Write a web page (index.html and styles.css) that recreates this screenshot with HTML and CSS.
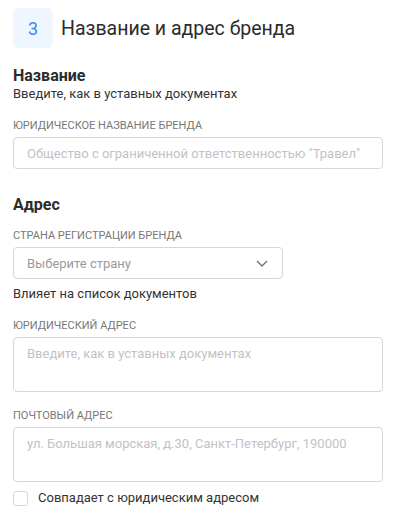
FILE: index.html
```html
<!DOCTYPE html>
<html lang="ru">
<head>
    <meta charset="UTF-8">
    <meta name="viewport" content="width=device-width, initial-scale=1.0">
    <title>Название и адрес бренда</title>
    <link rel="stylesheet" href="styles.css">
</head>
<body>
    <!-- Заголовок шага -->
    <div class="step-header">
        <div class="step-num">3</div>
        <h1 class="step-title">Название и адрес бренда</h1>
    </div>

    <!-- Название -->
    <div class="section">
        <h2 class="section-title">Название</h2>
        <p class="section-hint">Введите, как в уставных документах</p>

        <div class="field">
            <label class="field-label">Юридическое название бренда</label>
            <input class="input" type="text" placeholder="Общество с ограниченной ответственностью &quot;Травел&quot;">
        </div>
    </div>

    <!-- Адрес -->
    <div class="section section-address">
        <h2 class="section-title">Адрес</h2>

        <div class="field field-first">
            <label class="field-label">Страна регистрации бренда</label>
            <div class="select">
                <span class="select-placeholder">Выберите страну</span>
                <svg class="select-arrow" width="12" height="7" viewBox="0 0 12 7">
                    <path d="M1 1l5 5 5-5" fill="none" stroke="#6b6b70" stroke-width="1.3"/>
                </svg>
            </div>
            <p class="field-note">Влияет на список документов</p>
        </div>

        <div class="field">
            <label class="field-label">Юридический адрес</label>
            <textarea class="input textarea" placeholder="Введите, как в уставных документах"></textarea>
        </div>

        <div class="field">
            <label class="field-label">Почтовый адрес</label>
            <textarea class="input textarea" placeholder="ул. Большая морская, д.30, Санкт-Петербург, 190000"></textarea>
        </div>

        <label class="checkbox">
            <input type="checkbox">
            <span class="checkbox-box"></span>
            <span class="checkbox-text">Совпадает с юридическим адресом</span>
        </label>
    </div>
</body>
</html>
```

FILE: styles.css
```css
/* Базовые стили */
body {
    margin: 0;
    padding: 8px 14px 0 13px;
    font-family: Roboto, "Liberation Sans", sans-serif;
    color: #333;
    background: #fff;
}

/* Заголовок шага */
.step-header {
    display: flex;
    align-items: center;
    gap: 8px;
}

.step-num {
    width: 40px;
    height: 40px;
    border-radius: 6px;
    background-color: #eef6ff;
    color: #3b8af2;
    font-size: 18px;
    display: flex;
    align-items: center;
    justify-content: center;
}

.step-title {
    margin: 0;
    font-size: 19.5px;
    font-weight: 400;
    color: #2b2b2b;
}

/* Секции */
.section {
    margin-top: 18px;
}

.section-address {
    margin-top: 26px;
}

.section-title {
    margin: 0;
    font-size: 16px;
    line-height: 20px;
    font-weight: 700;
    color: #2b2b2b;
}

.section-hint {
    margin: 0;
    font-size: 13px;
    line-height: 16px;
}

/* Поля */
.field {
    margin-top: 17px;
}

.field-first {
    margin-top: 14px;
}

.field-label {
    display: block;
    font-size: 11px;
    line-height: 14px;
    text-transform: uppercase;
    color: #777;
    margin-bottom: 4px;
}

.input {
    display: block;
    box-sizing: border-box;
    width: 100%;
    height: 32px;
    margin: 0;
    padding: 0 13px;
    border: 1px solid #d6d6dc;
    border-radius: 4px;
    font-family: inherit;
    font-size: 13px;
    color: #333;
    background: #fff;
    outline: none;
}

.input::placeholder {
    color: #c2c2c6;
}

.textarea {
    height: 55px;
    padding-top: 7px;
    resize: none;
    line-height: 18px;
}

/* Выпадающий список */
.select {
    box-sizing: border-box;
    width: 270px;
    height: 32px;
    border: 1px solid #d6d6dc;
    border-radius: 4px;
    padding: 0 14px 0 13px;
    display: flex;
    align-items: center;
    justify-content: space-between;
}

.select-placeholder {
    font-size: 13px;
    color: #9a9aa0;
}

.field-note {
    margin: 7px 0 0;
    font-size: 13px;
    line-height: 16px;
}

/* Чекбокс */
.checkbox {
    display: flex;
    align-items: center;
    gap: 10px;
    margin-top: 8px;
    cursor: pointer;
}

.checkbox input {
    display: none;
}

.checkbox-box {
    box-sizing: border-box;
    width: 15px;
    height: 15px;
    border: 1px solid #d6d6dc;
    border-radius: 3px;
}

.checkbox-text {
    font-size: 13px;
    line-height: 16px;
}
```
